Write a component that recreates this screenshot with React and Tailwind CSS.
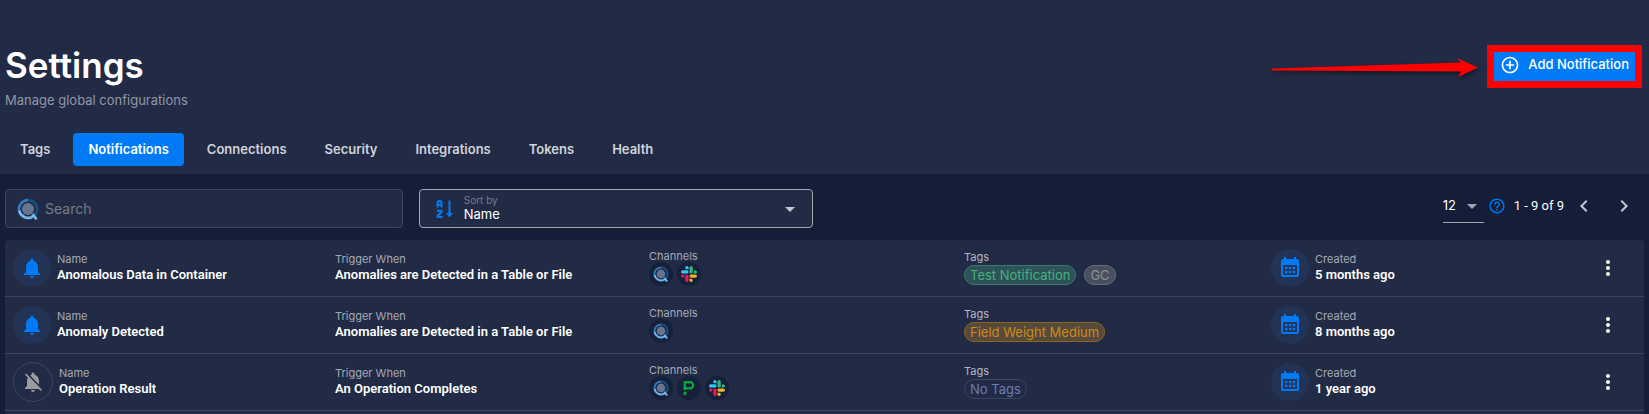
import {
  MdNotifications,
  MdNotificationsOff,
  MdAddCircleOutline,
  MdHelpOutline,
  MdChevronLeft,
  MdChevronRight,
  MdArrowDropDown,
  MdMoreVert,
} from "react-icons/md";

const tabs = ["Tags", "Notifications", "Connections", "Security", "Integrations", "Tokens", "Health"];

const rows = [
  {
    name: "Anomalous Data in Container",
    trigger: "Anomalies are Detected in a Table or File",
    channels: ["app", "slack"],
    tags: [
      { label: "Test Notification", tone: "green" },
      { label: "GC", tone: "gray" },
    ],
    created: "5 months ago",
    active: true,
  },
  {
    name: "Anomaly Detected",
    trigger: "Anomalies are Detected in a Table or File",
    channels: ["app"],
    tags: [{ label: "Field Weight Medium", tone: "orange" }],
    created: "8 months ago",
    active: true,
  },
  {
    name: "Operation Result",
    trigger: "An Operation Completes",
    channels: ["app", "pager", "slack"],
    tags: [],
    created: "1 year ago",
    active: false,
  },
];

const tones = {
  green: "border-[#3b7a6c] bg-[#2d5358] text-[#45b07c]",
  gray: "border-[#666c76] bg-[#474f60] text-[#8f9189]",
  orange: "border-[#8a6425] bg-[#574a3b] text-[#cb8b16]",
  none: "border-[#3a4568] text-[#6c7bb0]",
};

function AppLogo({ className }) {
  return (
    <svg viewBox="0 0 24 24" className={className} fill="none" aria-hidden="true">
      <circle cx="12" cy="12" r="6.6" fill="#66758f" />
      <path d="M12 2.2A9.8 9.8 0 0 1 19.5 18.3" stroke="#17507f" strokeWidth="3" />
      <path d="M2.4 14A9.8 9.8 0 0 1 12 2.2" stroke="#3478b4" strokeWidth="3" />
      <path d="M2.4 13.5A9.8 9.8 0 0 0 16 20.9L18 18.7L21.3 23.3" stroke="#73b5ec" strokeWidth="3" />
    </svg>
  );
}

function SlackLogo({ className }) {
  const arm =
    "M8.834 5.042a2.528 2.528 0 0 1-2.521-2.52A2.528 2.528 0 0 1 8.834 0a2.528 2.528 0 0 1 2.521 2.522v2.52H8.834zM8.834 6.313a2.528 2.528 0 0 1 2.521 2.521 2.528 2.528 0 0 1-2.521 2.521H2.522A2.528 2.528 0 0 1 0 8.834a2.528 2.528 0 0 1 2.522-2.521h6.312z";
  return (
    <svg viewBox="0 0 24 24" className={className} aria-hidden="true">
      <path d={arm} fill="#36c5f0" />
      <path d={arm} fill="#2eb67d" transform="rotate(90 12 12)" />
      <path d={arm} fill="#ecb22e" transform="rotate(180 12 12)" />
      <path d={arm} fill="#e01e5a" transform="rotate(270 12 12)" />
    </svg>
  );
}

function PagerLogo({ className }) {
  return (
    <svg viewBox="0 0 24 24" className={className} aria-hidden="true">
      <rect x="4" y="17.5" width="4" height="5" fill="#06ac38" />
      <path d="M4 3.300H13.5a4.700 4.700 0 0 1 0 9.400H5.700V3.300" fill="none" stroke="#06ac38" strokeWidth="3.4" />
      <rect x="4" y="11" width="3.4" height="4" fill="#06ac38" />
    </svg>
  );
}

function CalendarIcon({ className }) {
  return (
    <svg viewBox="0 0 24 24" className={className} fill="currentColor" aria-hidden="true">
      <path
        fillRule="evenodd"
        d="M6 1h2v2h8V1h2v2h1a2 2 0 0 1 2 2v14a2 2 0 0 1-2 2H5a2 2 0 0 1-2-2V5a2 2 0 0 1 2-2h1zM5 9v10h14V9z"
      />
      <path d="M7 10.8h2.4v2.4H7zM10.8 10.8h2.4v2.4h-2.4zM14.6 10.8H17v2.4h-2.4zM7 14.8h2.4v2.4H7zM10.8 14.8h2.4v2.4h-2.4zM14.6 14.8H17v2.4h-2.4z" />
    </svg>
  );
}

function SortIcon({ className }) {
  return (
    <svg viewBox="0 0 18 20" className={className} fill="none" stroke="currentColor" strokeWidth="2" aria-hidden="true">
      <path d="M1.5 8.500V3.200L2.700 2h1.600l1.200 1.200v5.300M1.500 5.800h4" />
      <path d="M.8 11.800h4.900v1L1.600 17v1h4.900" />
      <path d="M13.500 1.500V15" />
      <path d="M10 14h7l-3.500 4.500z" fill="currentColor" stroke="none" />
    </svg>
  );
}

const channelLogos = {
  app: { Logo: AppLogo, label: "In app" },
  slack: { Logo: SlackLogo, label: "Slack" },
  pager: { Logo: PagerLogo, label: "PagerDuty" },
};

function Field({ label, children }) {
  return (
    <div className="min-w-0 pb-0.5">
      <div className="text-[11px] leading-4 text-[#a4a9b5]">{label}</div>
      <div className="truncate font-[Roboto,'Noto_Sans',sans-serif] text-[13px] leading-4 font-semibold text-white">
        {children}
      </div>
    </div>
  );
}

function Tag({ tone, children }) {
  return (
    <span className={`rounded-full border px-[5px] text-[13px] leading-[18px] whitespace-nowrap ${tones[tone]}`}>{children}</span>
  );
}

function NotificationRow({ row }) {
  return (
    <li className="grid h-[57px] grid-cols-[322fr_314fr_315fr_307fr_325fr_auto] items-center border-b border-[#3c4560] pr-6 pl-2">
      <div className="flex min-w-0 items-center gap-1.5">
        {row.active ? (
          <span className="flex size-[38px] shrink-0 items-center justify-center rounded-full bg-[#223356] text-[#007bf5]">
            <MdNotifications className="size-6" />
          </span>
        ) : (
          <span className="flex size-10 shrink-0 items-center justify-center rounded-full border border-[#3c4560] text-[#9b9b9d]">
            <MdNotificationsOff className="size-6" />
          </span>
        )}
        <Field label="Name">{row.name}</Field>
      </div>
      <Field label="Trigger When">{row.trigger}</Field>
      <div>
        <div className="text-[11px] leading-3 text-[#a4a9b5]">Channels</div>
        <div className="flex gap-1">
          {row.channels.map((id) => {
            const { Logo, label } = channelLogos[id];
            return (
              <span key={id} title={label} className="flex size-6 items-center justify-center rounded-full bg-[#16203a]">
                <Logo className="size-4" />
              </span>
            );
          })}
        </div>
      </div>
      <div className="pb-0.5">
        <div className="text-[11px] leading-4 text-[#b4b8c2]">Tags</div>
        <div className="flex gap-2">
          {row.tags.length === 0 && <Tag tone="none">No Tags</Tag>}
          {row.tags.map((tag) => (
            <Tag key={tag.label} tone={tag.tone}>
              {tag.label}
            </Tag>
          ))}
        </div>
      </div>
      <div className="flex items-center gap-1.5">
        <span className="flex size-[38px] shrink-0 items-center justify-center rounded-full bg-[#223356] text-[#007bf5]">
          <CalendarIcon className="size-6" />
        </span>
        <Field label="Created">{row.created}</Field>
      </div>
      <button type="button" aria-label={`Actions for ${row.name}`} className="text-white">
        <MdMoreVert className="size-6" />
      </button>
    </li>
  );
}

export default function App() {
  return (
    <div className="flex min-h-screen flex-col bg-[#151e38] font-[Inter,'Noto_Sans',sans-serif] text-white">
      <header className="border-t border-[#1e2740] bg-[#222b45] px-[5px] pb-2">
        <div className="flex items-start justify-between pt-[45px] pr-[5px]">
          <div>
            <h1 className="text-[35px] leading-[38px] font-semibold">Settings</h1>
            <p className="pt-1.5 text-[13px] leading-5 text-[#9097a5]">Manage global configurations</p>
          </div>
          <div className="relative">
            <button
              type="button"
              className="flex h-[38px] items-center gap-2 rounded-sm bg-[#007bf5] px-2.5 text-[13px] font-medium whitespace-nowrap text-white"
            >
              <MdAddCircleOutline className="size-5" />
              Add Notification
            </button>
            <div className="pointer-events-none absolute -inset-x-[3px] -top-px -bottom-1 border-[7px] border-[#ff0000]" />
            <svg
              viewBox="0 0 206 20"
              className="pointer-events-none absolute top-[12px] right-full mr-[12px] h-5 w-[206px] drop-shadow-[1px_2px_2px_rgba(0,0,0,0.5)]"
              aria-hidden="true"
            >
              <path d="M0 10.500L189 4.500L185 0L206 9.500L186 19L189 13.500L0 12.500Z" fill="#ff0000" />
            </svg>
          </div>
        </div>
        <nav className="mt-[23px] flex gap-2" aria-label="Settings sections">
          {tabs.map((tab) => (
            <a
              key={tab}
              href={`#${tab.toLowerCase()}`}
              aria-current={tab === "Notifications" ? "page" : undefined}
              className={`rounded-sm px-[15px] text-[13px] leading-[33px] font-semibold ${
                tab === "Notifications" ? "bg-[#007bf5] text-white" : "text-[#d0d3da]"
              }`}
            >
              {tab}
            </a>
          ))}
        </nav>
      </header>

      <main className="flex flex-1 flex-col px-[5px] pt-[15px]">
        <div className="grid grid-cols-4 gap-4">
          <label className="flex h-[39px] items-center gap-1.5 rounded-sm border border-[#3a4460] bg-[#222b45] pl-[11px]">
            <AppLogo className="size-[22px] shrink-0" />
            <input
              type="search"
              aria-label="Search"
              placeholder="Search"
              className="min-w-0 flex-1 bg-transparent text-sm text-white outline-none placeholder:text-[#777b86]"
            />
          </label>
          <div className="mr-1 flex h-[39px] items-center rounded-sm border border-[#a3a6ad] bg-[#222b45] pr-2.5 pl-4">
            <SortIcon className="h-5 w-[18px] shrink-0 text-[#007bf5]" />
            <div className="flex min-w-0 flex-1 flex-col pb-px pl-2.5">
              <label htmlFor="sort" className="text-[10px] leading-3 text-[#777b86]">
                Sort by
              </label>
              <select id="sort" className="w-full appearance-none bg-transparent text-[13px] leading-4 text-white outline-none">
                <option>Name</option>
                <option>Created</option>
              </select>
            </div>
            <MdArrowDropDown className="size-6 shrink-0 text-[#c4c7ce]" />
          </div>
          <div className="col-span-2 flex h-[34px] items-center justify-end pr-2">
            <div className="flex h-full w-[41px] items-center border-b border-[#a3a6ad]">
              <select aria-label="Rows per page" className="w-5 appearance-none bg-transparent text-[13px] text-white outline-none">
                <option>12</option>
                <option>24</option>
              </select>
              <MdArrowDropDown className="size-6 shrink-0 text-[#a3a6ad]" />
            </div>
            <MdHelpOutline className="mr-2 ml-1 size-[18px] shrink-0 text-[#0075f0]" />
            <span className="font-[Roboto,'Noto_Sans',sans-serif] text-[13px] whitespace-nowrap">1 - 9 of 9</span>
            <button type="button" aria-label="Previous page" className="ml-2 text-[#c4c7ce]">
              <MdChevronLeft className="size-6" />
            </button>
            <button type="button" aria-label="Next page" className="ml-4 text-[#c4c7ce]">
              <MdChevronRight className="size-6" />
            </button>
          </div>
        </div>

        <ul className="mt-3 flex-1 rounded-t-sm bg-[#222b45]">
          {rows.map((row) => (
            <NotificationRow key={row.name} row={row} />
          ))}
        </ul>
      </main>
    </div>
  );
}
